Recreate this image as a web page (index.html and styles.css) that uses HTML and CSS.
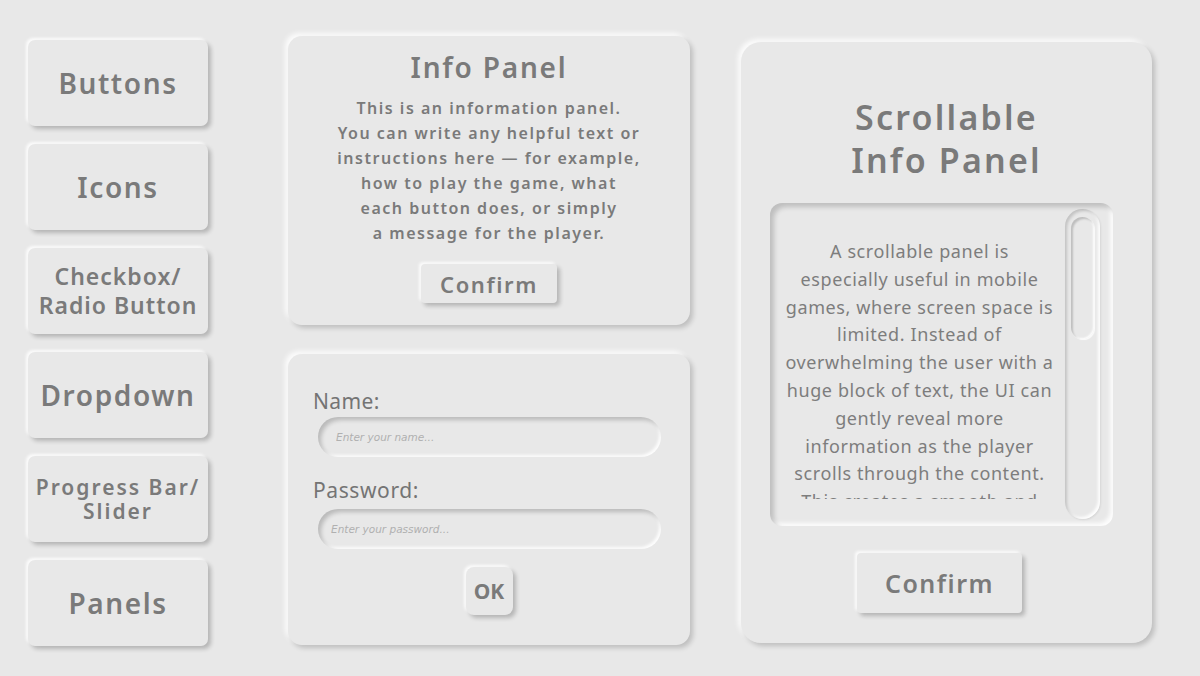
FILE: index.html
```html
<!DOCTYPE html>
<html lang="en">
<head>
    <meta charset="UTF-8">
    <meta name="viewport" content="width=device-width, initial-scale=1.0">
    <title>UI Kit - Panels</title>
    <link rel="stylesheet" href="styles.css">
</head>
<body>
    <div class="screen">
        <nav class="menu">
            <button class="menu-btn">Buttons</button>
            <button class="menu-btn">Icons</button>
            <button class="menu-btn small">Checkbox/<br>Radio Button</button>
            <button class="menu-btn">Dropdown</button>
            <button class="menu-btn smaller">Progress Bar/<br>Slider</button>
            <button class="menu-btn">Panels</button>
        </nav>

        <div class="middle">
            <section class="panel info">
                <h2>Info Panel</h2>
                <p>This is an information panel.<br>
                   You can write any helpful text or<br>
                   instructions here — for example,<br>
                   how to play the game, what<br>
                   each button does, or simply<br>
                   a message for the player.</p>
                <button class="btn confirm">Confirm</button>
            </section>

            <section class="panel form">
                <label for="name">Name:</label>
                <input type="text" id="name" class="field" placeholder="Enter your name...">
                <label for="password" class="pw-label">Password:</label>
                <input type="password" id="password" class="field pw" placeholder="Enter your password...">
                <button class="btn ok">OK</button>
            </section>
        </div>

        <section class="panel scroll-panel">
            <h2>Scrollable<br>Info Panel</h2>
            <div class="scroll-box">
                <div class="scroll-text">
                    <p>A scrollable panel is<br>
                       especially useful in mobile<br>
                       games, where screen space is<br>
                       limited. Instead of<br>
                       overwhelming the user with a<br>
                       huge block of text, the UI can<br>
                       gently reveal more<br>
                       information as the player<br>
                       scrolls through the content.<br>
                       This creates a smooth and</p>
                </div>
                <div class="track">
                    <div class="thumb"></div>
                </div>
            </div>
            <button class="btn confirm big">Confirm</button>
        </section>
    </div>
</body>
</html>
```

FILE: styles.css
```css
body {
    margin: 0;
    background: #e8e8e8;
    font-family: 'Noto Sans', 'Noto Sans CJK JP', sans-serif;
    color: #7a7a7a;
}
.screen {
    width: 1200px;
    height: 676px;
    display: flex;
    align-items: flex-start;
    padding: 36px 0 0 28px;
    box-sizing: border-box;
}

/* raised surfaces */
.menu-btn,
.btn,
.panel {
    background: #e8e8e8;
    border: none;
    box-shadow: 3px 3px 4px rgba(0,0,0,0.22), -2px -2px 3px rgba(255,255,255,0.85);
    font-family: inherit;
    color: #7a7a7a;
}

.menu {
    width: 180px;
    margin-top: 4px;
    display: flex;
    flex-direction: column;
    gap: 18px;
}
.menu-btn {
    height: 86px;
    border-radius: 7px;
    font-size: 28px;
    font-weight: 600;
    letter-spacing: 1.6px;
    padding: 0;
    cursor: pointer;
}
.menu-btn.small {
    font-size: 23px;
    line-height: 29px;
    letter-spacing: 1px;
}
.menu-btn.smaller {
    font-size: 21px;
    line-height: 24px;
    letter-spacing: 2px;
}

.middle {
    width: 402px;
    margin-left: 80px;
    display: flex;
    flex-direction: column;
    gap: 29px;
}
.panel {
    border-radius: 14px;
    box-shadow: 3px 3px 5px rgba(0,0,0,0.18), -3px -3px 5px rgba(255,255,255,0.85);
}

.info {
    height: 289px;
    box-sizing: border-box;
    padding-top: 15px;
    display: flex;
    flex-direction: column;
    align-items: center;
}
.info h2 {
    margin: 0;
    font-size: 28px;
    line-height: 32px;
    letter-spacing: 1.8px;
    font-weight: 600;
}
.info p {
    margin: 13px 0 0;
    font-size: 16px;
    line-height: 25px;
    font-weight: 600;
    letter-spacing: 1.5px;
    text-align: center;
}

.btn {
    border-radius: 4px;
    font-weight: 600;
    cursor: pointer;
    padding: 0;
}
.confirm {
    margin-top: 18px;
    width: 136px;
    height: 39px;
    font-size: 22px;
    letter-spacing: 1.6px;
}

.form {
    height: 291px;
    box-sizing: border-box;
    padding: 33px 29px 0 25px;
    display: flex;
    flex-direction: column;
}
.form label {
    font-size: 21px;
    line-height: 28px;
    letter-spacing: 0.4px;
    color: #747474;
}
.form .pw-label {
    margin-top: 19px;
    letter-spacing: 0.6px;
}
.field {
    margin: 2px 0 0 5px;
    height: 40px;
    border: none;
    border-radius: 20px;
    background: #e8e8e8;
    box-shadow: inset 3px 3px 4px rgba(0,0,0,0.2), inset -2px -2px 3px rgba(255,255,255,0.9);
    padding: 0 0 0 18px;
    font-family: 'DejaVu Sans', sans-serif;
    font-style: italic;
    font-size: 10.5px;
    color: #999;
    outline: none;
}
.field.pw {
    margin-top: 5px;
    padding-left: 13px;
}
.field::placeholder {
    color: #b0b0b0;
}
.ok {
    align-self: center;
    margin: 18px 0 0 4px;
    width: 47px;
    height: 48px;
    border-radius: 8px;
    font-size: 21px;
    font-weight: 700;
}

.scroll-panel {
    width: 411px;
    height: 601px;
    margin: 6px 0 0 51px;
    border-radius: 20px;
    box-sizing: border-box;
    padding-top: 54px;
    display: flex;
    flex-direction: column;
}
.scroll-panel h2 {
    margin: 0;
    font-size: 34px;
    line-height: 43px;
    letter-spacing: 2.2px;
    font-weight: 600;
    text-align: center;
}
.scroll-box {
    margin: 21px 0 0 29px;
    width: 343px;
    height: 323px;
    border-radius: 12px;
    box-shadow: inset 4px 4px 5px rgba(0,0,0,0.18), inset -3px -3px 4px rgba(255,255,255,0.9);
    display: flex;
}
.scroll-text {
    flex: 1;
    margin-top: 35px;
    padding-left: 7px;
    height: 261px;
    overflow: hidden;
}
.scroll-text p {
    margin: 0;
    font-size: 18px;
    line-height: 27.8px;
    letter-spacing: 0.6px;
    text-align: center;
    color: #7d7d7d;
}
.track {
    width: 35px;
    margin: 6px 13px 7px 3px;
    border-radius: 18px;
    box-sizing: border-box;
    padding: 8px 6px 0 6px;
    box-shadow: inset 2px 2px 3px rgba(0,0,0,0.16), inset -2px -2px 3px rgba(255,255,255,0.95), 1px 1px 2px rgba(0,0,0,0.08);
}
.thumb {
    height: 122px;
    border-radius: 12px;
    box-shadow: inset 2px 2px 2px rgba(0,0,0,0.18), inset -1px -1px 2px rgba(255,255,255,0.95), 1px 1px 1px rgba(255,255,255,0.8);
}
.confirm.big {
    align-self: center;
    margin: 27px 0 0 -14px;
    width: 165px;
    height: 60px;
    font-size: 25px;
    letter-spacing: 1.5px;
}
```
